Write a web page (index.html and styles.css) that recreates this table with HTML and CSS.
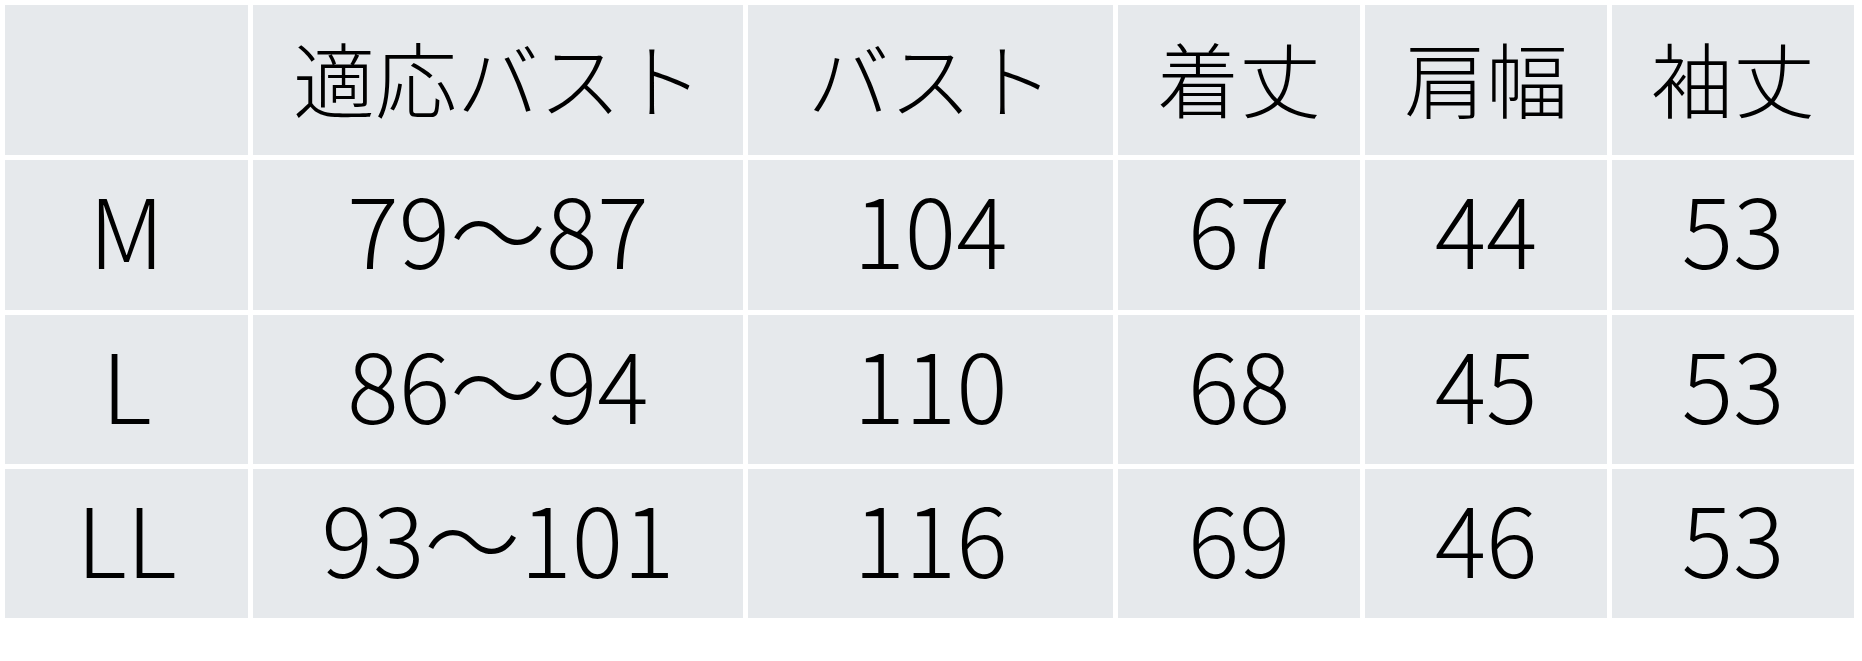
FILE: index.html
```html
<!DOCTYPE html>
<html lang="ja">
<head>
<meta charset="utf-8">
<link rel="stylesheet" href="styles.css">
</head>
<body>
<div class="size-table">
  <div class="cell head"></div>
  <div class="cell head">適応バスト</div>
  <div class="cell head">バスト</div>
  <div class="cell head">着丈</div>
  <div class="cell head">肩幅</div>
  <div class="cell head">袖丈</div>

  <div class="cell">M</div>
  <div class="cell">79～87</div>
  <div class="cell">104</div>
  <div class="cell">67</div>
  <div class="cell">44</div>
  <div class="cell">53</div>

  <div class="cell">L</div>
  <div class="cell">86～94</div>
  <div class="cell">110</div>
  <div class="cell">68</div>
  <div class="cell">45</div>
  <div class="cell">53</div>

  <div class="cell">LL</div>
  <div class="cell">93～101</div>
  <div class="cell">116</div>
  <div class="cell">69</div>
  <div class="cell">46</div>
  <div class="cell">53</div>
</div>
</body>
</html>
```

FILE: styles.css
```css
html, body {
  margin: 0;
  padding: 0;
  background: #ffffff;
}

body {
  padding: 5px 0 0 5px;
  font-family: "Noto Sans CJK JP", "Noto Sans", sans-serif;
  color: #000;
}

.size-table {
  display: grid;
  grid-template-columns: 243px 490px 365px 242px 242px 242px;
  grid-template-rows: 150px 150px 149px 149px;
  gap: 5px;
}

.cell {
  background: #e6e9ec;
  display: flex;
  align-items: center;
  justify-content: center;
  font-size: 96px;
  font-weight: 300;
  line-height: 1;
  padding-bottom: 14px;
  box-sizing: border-box;
}

.cell.head {
  font-size: 82px;
  padding-bottom: 7px;
}
```
